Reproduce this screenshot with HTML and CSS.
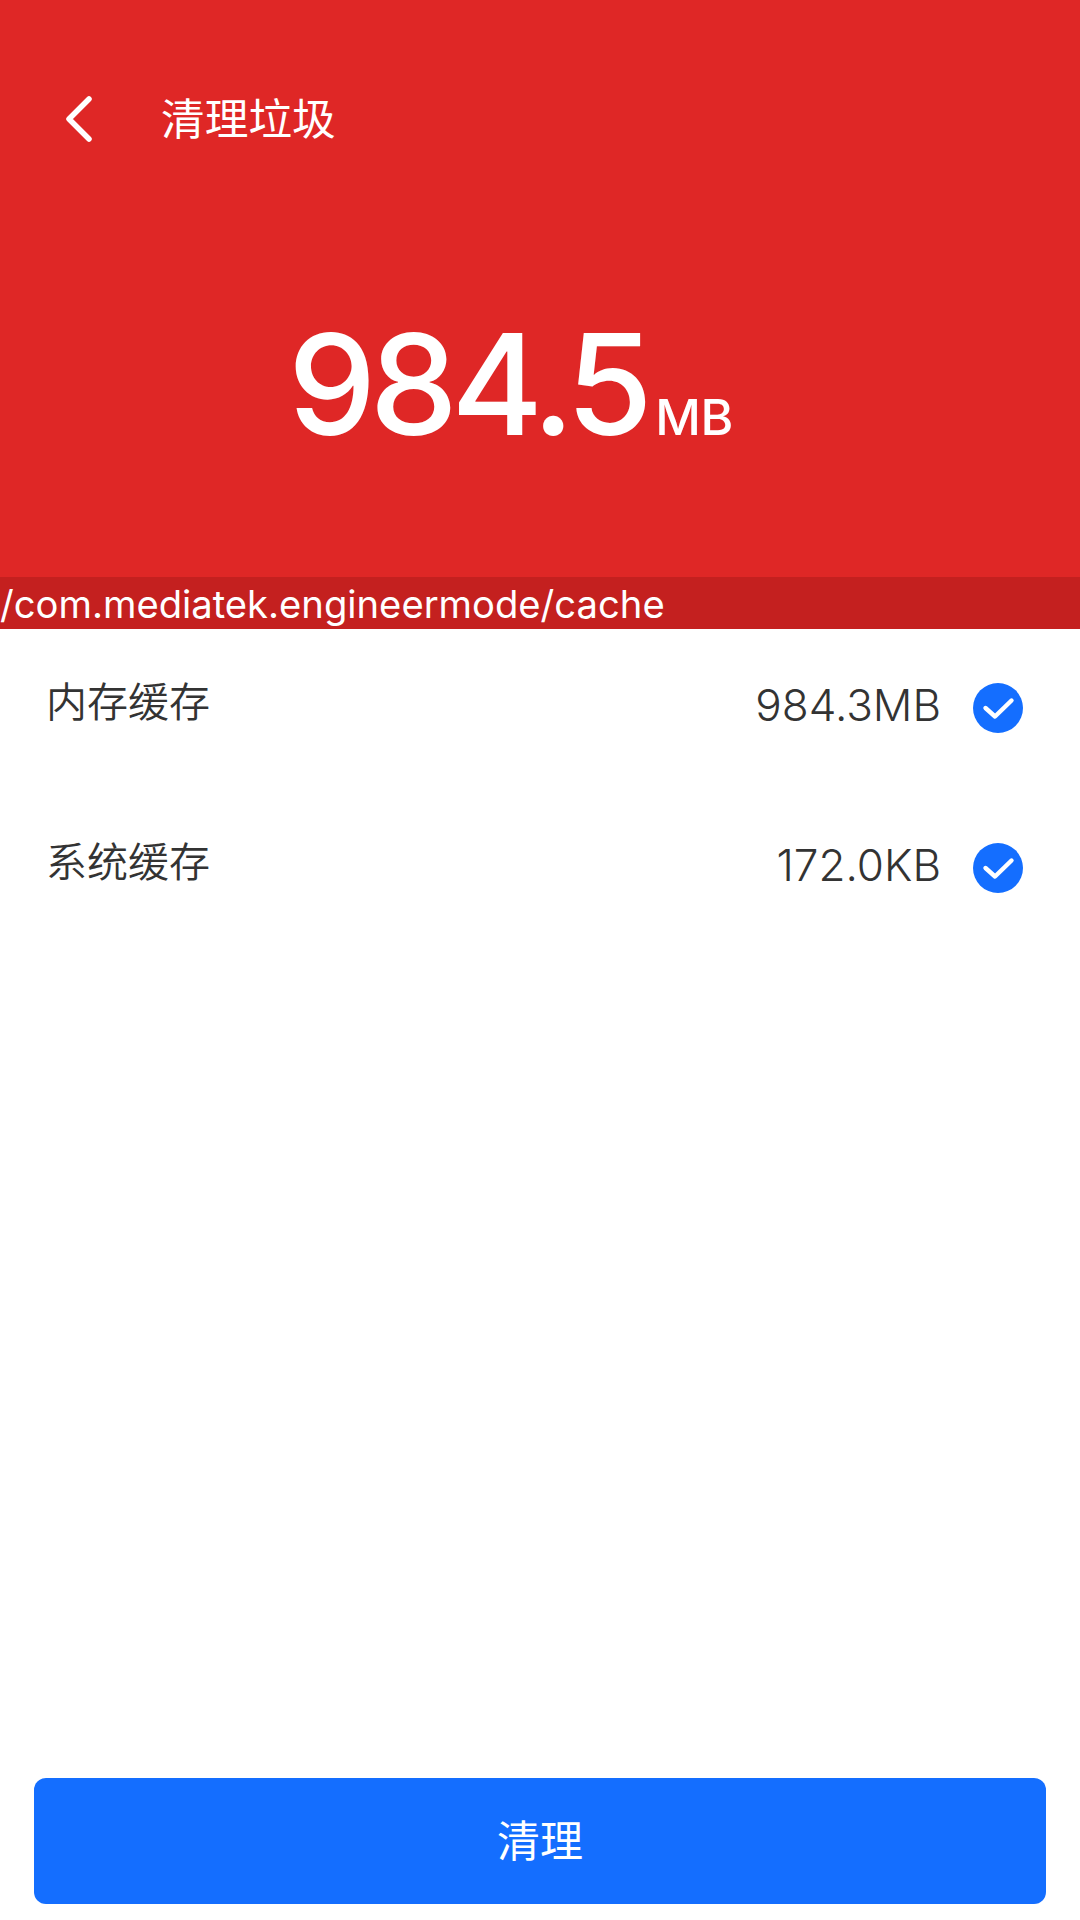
FILE: index.html
```html
<!DOCTYPE html>
<html lang="zh-CN">
<head>
<meta charset="utf-8">
<title>清理垃圾</title>
<link rel="stylesheet" href="styles.css">
</head>
<body>
<div class="screen">
  <header class="header">
    <div class="topbar">
      <svg class="back" viewBox="0 0 32 52" width="32" height="52" aria-hidden="true"><path d="M26 7 L6 27 L26 47" fill="none" stroke="#fff" stroke-width="5.5" stroke-linecap="round" stroke-linejoin="round"/></svg>
      <h1 class="title">清理垃圾</h1>
    </div>
    <div class="hero"><span class="size">984.5</span><span class="unit">MB</span></div>
    <div class="path">/com.mediatek.engineermode/cache</div>
  </header>
  <main class="list">
    <div class="row">
      <span class="label">内存缓存</span>
      <span class="value">984.3MB</span>
      <svg class="check" viewBox="0 0 50 50" width="50" height="50" aria-hidden="true"><circle cx="25" cy="25" r="25" fill="#146eff"/><path d="M12.5 25 L22 33.5 L38.5 17.5" fill="none" stroke="#fff" stroke-width="4.4" stroke-linecap="round" stroke-linejoin="round"/></svg>
    </div>
    <div class="row">
      <span class="label">系统缓存</span>
      <span class="value">172.0KB</span>
      <svg class="check" viewBox="0 0 50 50" width="50" height="50" aria-hidden="true"><circle cx="25" cy="25" r="25" fill="#146eff"/><path d="M12.5 25 L22 33.5 L38.5 17.5" fill="none" stroke="#fff" stroke-width="4.4" stroke-linecap="round" stroke-linejoin="round"/></svg>
    </div>
  </main>
  <button class="clean">清理</button>
</div>
</body>
</html>
```

FILE: styles.css
```css
* { box-sizing: border-box; margin: 0; padding: 0; }
html, body { width: 1080px; height: 1920px; overflow: hidden; background: #fff; }
body { font-family: Inter, "Noto Sans CJK SC", sans-serif; }
.screen { display: flex; flex-direction: column; height: 1920px; }
.header { background: #df2726; color: #fff; height: 629px; display: flex; flex-direction: column; }
.topbar { display: flex; align-items: center; height: 236px; padding-left: 63px; }
.back { flex: none; }
.title { font-family: "Noto Sans CJK SC", sans-serif; font-size: 43.7px; font-weight: 400; margin-left: 66px; padding-bottom: 5px; line-height: 60px; }
.hero { display: flex; align-items: baseline; padding-left: 288px; height: 341px; padding-top: 73px; line-height: 1; }
.size { font-size: 140px; font-weight: 500; line-height: 150px; letter-spacing: -6.5px; }
.unit { font-size: 50px; font-weight: 500; margin-left: 9px; letter-spacing: -0.5px; }
.path { background: #c4201f; height: 52px; line-height: 52px; padding-top: 1px; font-size: 38.2px; white-space: nowrap; }
.list { flex: 1; }
.row { height: 160px; display: flex; align-items: center; padding: 0 57px 2px 46px; color: #333; }
.label { font-family: "Noto Sans CJK SC", sans-serif; font-size: 41px; font-weight: 350; flex: 1; padding-bottom: 19px; line-height: 56px; }
.value { font-size: 44px; font-weight: 300; padding-bottom: 7px; }
.check { flex: none; margin-left: 32px; }
.clean { display: block; margin: 0 34px 16px; height: 126px; border: 0; border-radius: 12px; background: #146eff; color: #fff; font-family: "Noto Sans CJK SC", sans-serif; font-size: 43px; font-weight: 400; padding-bottom: 7px; }
```
